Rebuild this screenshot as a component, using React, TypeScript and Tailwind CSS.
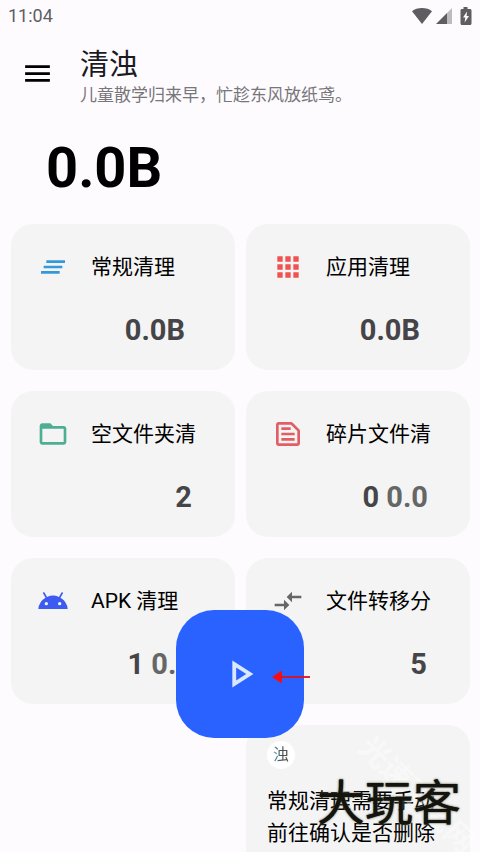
import React from 'react';
import type { IconType } from 'react-icons';
import {
  MdAndroid,
  MdApps,
  MdClearAll,
  MdCompareArrows,
  MdFolderOpen,
  MdMenu,
  MdOutlinePlayArrow,
  MdOutlineTextSnippet,
} from 'react-icons/md';

interface CleanItem {
  title: string;
  icon: IconType;
  iconClass: string;
  value: string;
  extra?: string;
  valueClass: string;
}

const LEFT_ITEMS: CleanItem[] = [
  { title: '常规清理', icon: MdClearAll, iconClass: 'text-[#3498db]', value: '0.0B', valueClass: 'pr-[50px]' },
  { title: '空文件夹清', icon: MdFolderOpen, iconClass: 'text-[#4caf93]', value: '2', valueClass: 'pr-[43px]' },
  { title: 'APK 清理', icon: MdAndroid, iconClass: 'text-[#3d5af1]', value: '1', extra: '0.0', valueClass: 'pr-[42px]' },
];

const RIGHT_ITEMS: CleanItem[] = [
  { title: '应用清理', icon: MdApps, iconClass: 'text-[#ef5350]', value: '0.0B', valueClass: 'pr-[50px]' },
  { title: '碎片文件清', icon: MdOutlineTextSnippet, iconClass: 'text-[#e35d64]', value: '0', extra: '0.0', valueClass: 'pr-[42px]' },
  { title: '文件转移分', icon: MdCompareArrows, iconClass: 'text-[#666666]', value: '5', valueClass: 'pr-[43px]' },
];

const StatusBar: React.FC = () => (
  <div className="flex h-8 items-center justify-between pl-2 pr-2 text-[#5f5d61]">
    <span className="text-lg leading-8">11:04</span>
    <div className="flex items-center">
      <svg className="h-4 w-5" viewBox="0 0 20 16" fill="currentColor" aria-hidden="true">
        <path d="M0 3.2C2.6 1 6 0 10 0s7.400 1 10 3.200L10 16z" />
      </svg>
      <svg className="ml-1 h-4 w-4" viewBox="0 0 16 16" fill="currentColor" aria-hidden="true">
        <path d="M11 5L16 0v16h-5z" opacity="0.4" />
        <path d="M0 16L11 5v11z" />
      </svg>
      <svg className="ml-2 h-[18px] w-3" viewBox="0 0 12 18" fill="currentColor" aria-hidden="true">
        <path
          fillRule="evenodd"
          d="M3.500 0h4v2H10c.8 0 1.500.6 1.500 1.500v13c0 .9-.7 1.500-1.500 1.500H2C1.200 18 .5 17.400.5 16.500v-13C.5 2.600 1.200 2 2 2h1.500zM7 4.500L3 10.500h2.300L4.600 15.500 9 9H6.600z"
        />
      </svg>
    </div>
  </div>
);

const CleanCard: React.FC<{ item: CleanItem }> = ({ item }) => {
  const Icon = item.icon;
  return (
    <section className="h-[146px] overflow-hidden rounded-[22px] bg-[#f4f4f4] pl-[26px] pt-[27px]">
      <div className="flex items-center gap-[22px]">
        <Icon className={`size-8 shrink-0 ${item.iconClass}`} aria-hidden="true" />
        <h2 className="whitespace-nowrap text-[21px] leading-8 text-black">{item.title}</h2>
      </div>
      <p className={`mt-[29px] text-right text-[29px] font-bold leading-9 text-[#454448] ${item.valueClass}`}>
        {item.value}
        {item.extra && <span className="text-[#666666]"> {item.extra}</span>}
      </p>
    </section>
  );
};

export default function App() {
  return (
    <div className="relative h-screen overflow-hidden bg-[#fefbff] font-[Roboto,'Noto_Sans_CJK_SC',sans-serif]">
      <StatusBar />

      <header className="flex items-center pl-[21px] pt-[15px]">
        <button type="button" aria-label="菜单" className="-mt-2 text-black">
          <MdMenu className="size-[33px]" />
        </button>
        <div className="ml-[26px]">
          <h1 className="text-[29px] leading-9 text-[#1b1b1f]">清浊</h1>
          <p className="text-[17px] leading-6 text-[#77767a]">儿童散学归来早，忙趁东风放纸鸢。</p>
        </div>
      </header>

      <p className="mt-[29px] pl-[46px] text-[56px] font-bold leading-16 text-black">0.0B</p>

      <main className="mt-6 flex gap-[11px] pl-[11px] pr-[10px]">
        <div className="flex flex-1 flex-col gap-[21px]">
          {LEFT_ITEMS.map((item) => (
            <CleanCard key={item.title} item={item} />
          ))}
        </div>
        <div className="flex flex-1 flex-col gap-[21px]">
          {RIGHT_ITEMS.map((item) => (
            <CleanCard key={item.title} item={item} />
          ))}
          <section className="rounded-[22px] bg-[#f4f4f4] px-[21px] pb-8 pt-4">
            <div className="flex size-7 items-center justify-center rounded-full bg-white text-base">
              <span className="bg-linear-to-r from-[#3f9fc4] via-[#4a5358] to-[#55504c] bg-clip-text text-transparent">浊</span>
            </div>
            <p className="mt-4 text-[21px] leading-8 text-black">
              常规清理需要手动
              <br />
              前往确认是否删除
            </p>
          </section>
        </div>
      </main>

      {/* Start button */}
      <button
        type="button"
        aria-label="开始"
        className="absolute bottom-[114px] left-1/2 flex size-32 -translate-x-1/2 items-center justify-center rounded-[38px] bg-[#2962ff] text-[#d9e8ff]"
      >
        <MdOutlinePlayArrow className="size-[46px]" />
      </button>
      <svg className="absolute bottom-[168px] left-1/2 ml-8 h-3.5 w-[38px]" viewBox="0 0 38 14" aria-hidden="true">
        <path d="M0 7L10 0.500v13z" fill="#f80c12" />
        <path d="M9 7h29" stroke="#e0101c" strokeWidth="1.800" />
      </svg>

      {/* Watermarks */}
      <span className="pointer-events-none absolute bottom-[37px] right-[-12px] rotate-45 whitespace-nowrap text-3xl leading-10 font-bold text-white/40">
        光速下载网
      </span>
      <span className="pointer-events-none absolute bottom-5 right-[19px] text-5xl leading-14 text-[#14140f] [text-shadow:0_0_1px_#14140f,0_0_3px_#8f8d78]">
        大玩客
      </span>
    </div>
  );
}
